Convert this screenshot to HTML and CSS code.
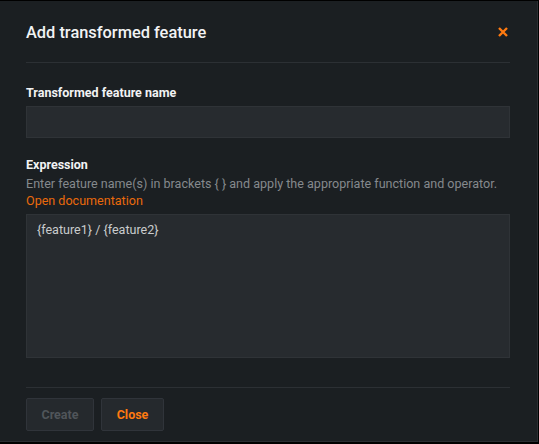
FILE: index.html
```html
<!DOCTYPE html>
<html>
<head>
<meta charset="utf-8">
<link rel="stylesheet" href="styles.css">
</head>
<body>
<div class="dialog">
  <div class="header">
    <h2 class="title">Add transformed feature</h2>
    <button class="close-x" aria-label="Close">
      <svg width="10" height="10" viewBox="0 0 10 10"><path d="M1 1L9 9M9 1L1 9" stroke="#ff7a10" stroke-width="2.4" stroke-linecap="butt"/></svg>
    </button>
  </div>
  <div class="body">
    <label class="label">Transformed feature name</label>
    <input class="input" type="text">
    <label class="label expr-label">Expression</label>
    <div class="help">Enter feature name(s) in brackets { } and apply the appropriate function and operator.</div>
    <a class="doc-link">Open documentation</a>
    <div class="textarea">{feature1} / {feature2}</div>
  </div>
  <div class="footer">
    <button class="btn btn-disabled">Create</button>
    <button class="btn btn-close">Close</button>
  </div>
</div>
</body>
</html>
```
FILE: styles.css
```css
html, body {
  margin: 0;
  padding: 0;
  background: #000;
}
body {
  width: 539px;
  height: 444px;
  padding-top: 1px;
  box-sizing: border-box;
  font-family: Roboto, "Noto Sans", sans-serif;
}
.dialog {
  width: 538px;
  height: 441px;
  box-sizing: border-box;
  background: #1b1f22;
  border-right: 1px solid #2a2e32;
  border-bottom: 1px solid #2a2e32;
  padding: 0 27px 0 26px;
  display: flex;
  flex-direction: column;
}
.header {
  height: 62px;
  box-sizing: border-box;
  border-bottom: 1px solid #2c3034;
  display: flex;
  align-items: center;
  justify-content: space-between;
}
.title {
  margin: 0;
  font-size: 16.4px;
  font-weight: 500;
  color: #f2f3f4;
  padding-top: 1px;
}
.close-x {
  background: none;
  border: none;
  padding: 0;
  margin-right: 2px;
  width: 10px;
  height: 10px;
  display: flex;
}
.body {
  display: flex;
  flex-direction: column;
  padding-top: 22px;
  flex: 1;
}
.label {
  font-size: 12.5px;
  font-weight: 700;
  color: #f2f3f4;
  line-height: 16px;
}
.input {
  margin-top: 5px;
  height: 32px;
  box-sizing: border-box;
  background: #272b2f;
  border: 1px solid #2f3337;
  outline: none;
}
.expr-label {
  margin-top: 19px;
}
.help {
  font-size: 12.55px;
  color: #85898d;
  line-height: 17px;
  margin-top: 2px;
  white-space: nowrap;
}
.doc-link {
  font-size: 12.55px;
  color: #ea6a0c;
  line-height: 17px;
}
.textarea {
  margin-top: 5px;
  height: 144px;
  box-sizing: border-box;
  background: #272b2f;
  border: 1px solid #2f3337;
  padding: 7px 10px;
  font-size: 12.55px;
  color: #c9cbcd;
  line-height: 16px;
}
.footer {
  border-top: 1px solid #2c3034;
  height: 54px;
  box-sizing: border-box;
  padding-top: 10px;
  display: flex;
  gap: 7px;
  align-items: flex-start;
}
.btn {
  height: 33px;
  box-sizing: border-box;
  background: #25292d;
  border: 1px solid #30343a;
  border-radius: 2px;
  font-family: Roboto, "Noto Sans", sans-serif;
  font-size: 12.5px;
  font-weight: 700;
  padding: 0;
}
.btn-disabled {
  color: #50555a;
  width: 68px;
}
.btn-close {
  color: #ff7a10;
  width: 63px;
}
```
